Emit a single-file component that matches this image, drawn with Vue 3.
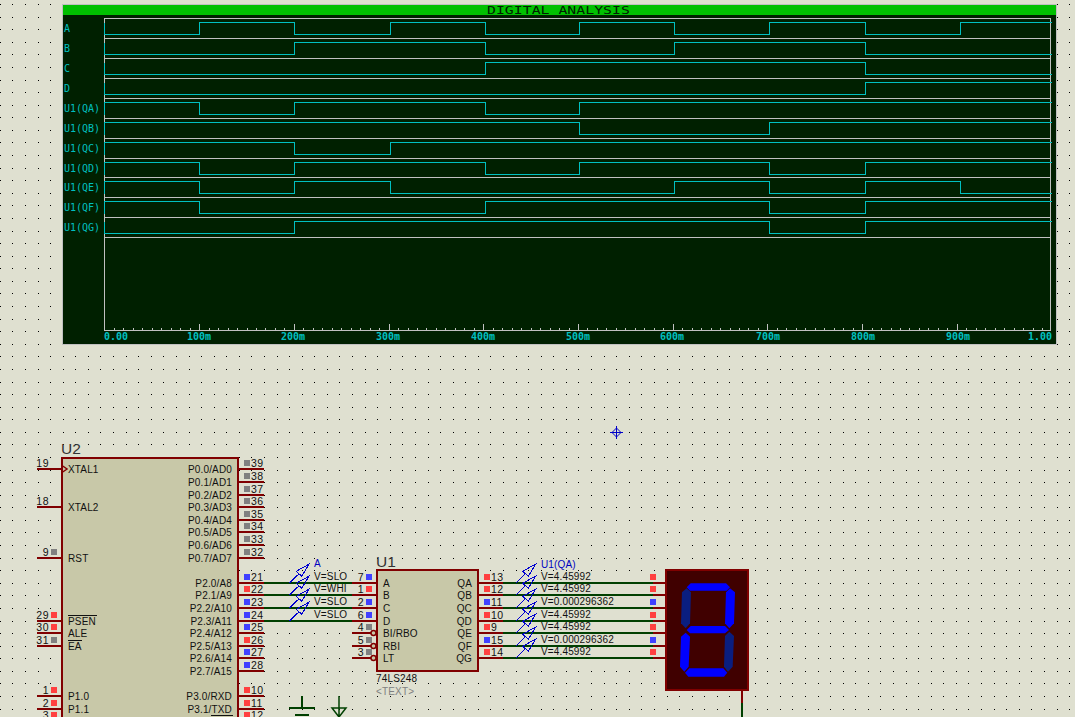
<template>
  <svg class="sheet" width="1075" height="717" viewBox="0 0 1075 717">
    <rect width="1075" height="717" class="paper" />
    <path :d="gridDots" class="dots" />

    <!-- digital analysis graph -->
    <rect x="62.5" y="4.5" width="994" height="340" class="graph" />
    <rect x="63" y="5" width="993" height="10" class="graph-bar" />
    <text transform="translate(487 13.5) scale(1.485 1)" class="graph-title">DIGITAL ANALYSIS</text>

    <path v-for="y in rowLines" :key="y" :d="`M104 ${y + 0.5}H1051`" class="grid-line" />
    <path d="M104.5 18V331M1050.5 18V331" class="grid-line" />
    <path :d="axisTicks" class="grid-line" />

    <g v-for="(row, i) in waves" :key="row.name">
      <text x="64" :y="rowLines[i] + 14" class="graph-text">{{ row.name }}</text>
      <path :d="wavePath(row.bits, rowLines[i])" class="wave" />
    </g>
    <text v-for="t in axisLabels" :key="t.s" :x="t.x" y="340" class="graph-text axis">{{ t.s }}</text>

    <!-- cursor -->
    <g class="cursor">
      <path d="M610 432.5H623M616.5 426V439" />
      <path d="M616.5 428L621 432.5L616.5 437L612 432.5Z" />
    </g>

    <!-- chips go under their pin labels -->
    <rect x="62" y="458" width="176" height="280" class="chip" />
    <rect x="377" y="570" width="101" height="101" class="chip" />
    <text x="61" y="454" class="ref">U2</text>
    <text x="376" y="567" class="ref">U1</text>

    <g v-for="p in allPins" :key="p.id">
      <path :d="`M${p.x1} ${p.y}H${p.x2}`" class="pin" />
      <rect v-if="p.c" :x="p.sx" :y="p.y - 9" width="6" height="6" :class="'st-' + p.c" />
      <text v-if="p.n" :x="p.nx" :y="p.y - 2.5" :class="['num', p.right ? '' : 'end']">{{ p.n }}</text>
    </g>
    <path d="M62 465.5L67 469L62 472.5" class="thin-pin" />
    <text v-for="l in chipLabels" :key="l.s" :x="l.x" :y="l.y + 4" :class="['lbl', l.end ? 'end' : '']">{{ l.s }}</text>
    <path d="M68 615.5H97M68 640.5H82M211 715.5H233" class="over" />

    <!-- wires -->
    <path v-for="y in wireLeft" :key="'wl' + y" :d="`M264 ${y}H352`" class="wire" />
    <path v-for="y in wireRight" :key="'wr' + y" :d="`M503 ${y}H653`" class="wire" />

    <circle v-for="y in [633, 646, 658]" :key="'c' + y" cx="373.5" :cy="y" r="2.5" class="bubble" />
    <text x="376" y="682" class="lbl">74LS248</text>
    <text x="376" y="695" class="lbl grey">&lt;TEXT&gt;</text>

    <!-- voltage probes -->
    <g v-for="p in probes" :key="p.key" :transform="`translate(${p.x} ${p.y})`" class="probe">
      <path d="M0 0L9.5 -9.2M19.7 -19L6.7 -11.7L12.3 -6.7Z" />
    </g>
    <text v-for="v in voltages" :key="v.key" :x="v.x" :y="v.y - 3" class="lbl">{{ v.s }}</text>
    <text x="314" y="567" class="lbl blue">A</text>
    <text x="541" y="568" class="lbl blue">U1(QA)</text>

    <!-- seven segment display -->
    <rect x="666" y="570" width="82" height="120" class="display" />
    <g transform="translate(630 560) scale(0.3333)">
      <polygon v-for="s in segments" :key="s.id" :points="s.pts" :class="s.on ? 'seg-on' : 'seg-off'" />
    </g>
    <path d="M742 691V704" class="pin" />
    <path d="M742 703V717" class="wire" />

    <!-- power terminals -->
    <path d="M302 696V708M289 708H315M295 715H309" class="wire thin" />
    <path d="M339 696V717M332 708H346L339 717Z" class="wire thin open" />
  </svg>
</template>

<script setup>
const gridDots = (() => {
  let d = '';
  for (let i = 0; i < 86; i++) {
    for (let j = 0; j < 57; j++) {
      const x = Math.floor(0.3 + 12.58 * i);
      const y = Math.floor(4.6 + 12.58 * j);
      d += `M${x} ${y + 0.5}h1`;
    }
  }
  return d;
})();

const rowLines = [18, 38, 58, 78, 98, 118, 138, 158, 177, 197, 217, 237];
const steps = [104, 199, 294, 390, 485, 579, 674, 769, 865, 960, 1052];

const waves = [
  { name: 'A', bits: '0101010101' },
  { name: 'B', bits: '0011001100' },
  { name: 'C', bits: '0000111100' },
  { name: 'D', bits: '0000000011' },
  { name: 'U1(QA)', bits: '1011011111' },
  { name: 'U1(QB)', bits: '1111100111' },
  { name: 'U1(QC)', bits: '1101111111' },
  { name: 'U1(QD)', bits: '1011011011' },
  { name: 'U1(QE)', bits: '1010001010' },
  { name: 'U1(QF)', bits: '1000111011' },
  { name: 'U1(QG)', bits: '0011111011' },
];

function wavePath(bits, top) {
  const hi = top + 4.5;
  const lo = top + 16.5;
  const other = bits[0] === '1' ? lo : hi;
  let d = `M104.5 ${other}`;
  for (let i = 0; i < bits.length; i++) {
    const y = bits[i] === '1' ? hi : lo;
    d += `V${y}H${i === bits.length - 1 ? steps[i + 1] : steps[i + 1] + 0.5}`;
  }
  return d;
}

const axisTicks = (() => {
  let d = '';
  for (let i = 1; i < 100; i++) {
    const x = Math.round(104.5 + 9.47 * i) + 0.5;
    d += `M${x} ${i % 10 === 0 ? 324 : 328}V330`;
  }
  return d + 'M104 330.5H1051';
})();

const axisLabels = [
  { x: 104, s: '0.00' }, { x: 187, s: '100m' }, { x: 281, s: '200m' }, { x: 376, s: '300m' },
  { x: 471, s: '400m' }, { x: 566, s: '500m' }, { x: 660, s: '600m' }, { x: 756, s: '700m' },
  { x: 851, s: '800m' }, { x: 946, s: '900m' }, { x: 1028, s: '1.00' },
];

const u2LeftPins = [
  [19, 469, ''], [18, 507, ''], [9, 558, 'g'], [29, 621, 'r'], [30, 633, 'r'], [31, 646, 'g'],
  [1, 696, 'r'], [2, 709, 'r'], [3, 721, 'r'],
];
const u2RightPins = [
  [39, 469, 'g'], [38, 482, 'g'], [37, 495, 'g'], [36, 507, 'g'], [35, 520, 'g'], [34, 532, 'g'],
  [33, 545, 'g'], [32, 558, 'g'], [21, 583, 'b'], [22, 595, 'r'], [23, 608, 'b'], [24, 621, 'b'],
  [25, 633, 'b'], [26, 646, 'r'], [27, 658, 'b'], [28, 671, 'b'], [10, 696, 'r'], [11, 709, 'r'], [12, 721, 'r'],
];
const u1LeftPins = [
  [7, 583, 'b'], [1, 595, 'r'], [2, 608, 'b'], [6, 621, 'b'], [4, 633, 'g'], [5, 646, 'g'], [3, 658, 'g'],
];
const u1RightPins = [
  [13, 583, 'r'], [12, 595, 'r'], [11, 608, 'b'], [10, 621, 'r'], [9, 633, 'r'], [15, 646, 'b'], [14, 658, 'r'],
];
const dispPins = [
  [583, 'r'], [595, 'r'], [608, 'b'], [621, 'r'], [633, 'r'], [646, 'b'], [658, 'r'],
];

const allPins = [
  ...u2LeftPins.map(([n, y, c]) => ({ id: 'ul' + n, n, y, c, x1: 37, x2: 62, sx: 51, nx: 49, right: false })),
  ...u2RightPins.map(([n, y, c]) => ({ id: 'ur' + n, n, y, c, x1: 238, x2: 264, sx: 244, nx: 251, right: true })),
  ...u1LeftPins.map(([n, y, c]) => ({ id: 'al' + n, n, y, c, x1: 352, x2: y > 625 ? 371 : 377, sx: 366, nx: 364, right: false })),
  ...u1RightPins.map(([n, y, c]) => ({ id: 'ar' + n, n, y, c, x1: 478, x2: 503, sx: 484, nx: 491, right: true })),
  ...dispPins.map(([y, c]) => ({ id: 'd' + y, y, c, x1: 653, x2: 666, sx: 650 })),
];

const chipLabels = [
  ['XTAL1', 68, 469], ['XTAL2', 68, 507], ['RST', 68, 558], ['PSEN', 68, 621], ['ALE', 68, 633],
  ['EA', 68, 646], ['P1.0', 68, 696], ['P1.1', 68, 709],
  ['A', 383, 583], ['B', 383, 595], ['C', 383, 608], ['D', 383, 621],
  ['BI/RBO', 383, 633], ['RBI', 383, 646], ['LT', 383, 658],
].map(([s, x, y]) => ({ s, x, y, end: false })).concat([
  ['P0.0/AD0', 232, 469], ['P0.1/AD1', 232, 482], ['P0.2/AD2', 232, 495], ['P0.3/AD3', 232, 507],
  ['P0.4/AD4', 232, 520], ['P0.5/AD5', 232, 532], ['P0.6/AD6', 232, 545], ['P0.7/AD7', 232, 558],
  ['P2.0/A8', 232, 583], ['P2.1/A9', 232, 595], ['P2.2/A10', 232, 608], ['P2.3/A11', 232, 621],
  ['P2.4/A12', 232, 633], ['P2.5/A13', 232, 646], ['P2.6/A14', 232, 658], ['P2.7/A15', 232, 671],
  ['P3.0/RXD', 232, 696], ['P3.1/TXD', 232, 709],
  ['QA', 472, 583], ['QB', 472, 595], ['QC', 472, 608], ['QD', 472, 621],
  ['QE', 472, 633], ['QF', 472, 646], ['QG', 472, 658],
].map(([s, x, y]) => ({ s, x, y, end: true })));

const wireLeft = [583, 595, 608, 621];
const wireRight = [583, 595, 608, 621, 633, 646, 658];

const probes = [
  ...wireLeft.map((y) => ({ key: 'l' + y, x: 289.5, y })),
  ...wireRight.map((y) => ({ key: 'r' + y, x: 516, y })),
];

const voltages = [
  ...['V=SLO', 'V=WHI', 'V=SLO', 'V=SLO'].map((s, i) => ({ key: 'vl' + i, s, x: 314, y: wireLeft[i] })),
  ...['V=4.45992', 'V=4.45992', 'V=0.000296362', 'V=4.45992', 'V=4.45992', 'V=0.000296362', 'V=4.45992']
    .map((s, i) => ({ key: 'vr' + i, s, x: 541, y: wireRight[i] })),
];

// coordinates are 3x, taken from the enlarged display
const segments = [
  { id: 'a', on: true, pts: '170,82 182,70 288,70 300,82 290,92 180,92' },
  { id: 'f', on: false, pts: '170,85 183,97 180,190 167,205 153,190 156,97' },
  { id: 'b', on: true, pts: '300,85 315,97 312,190 298,205 285,190 288,97' },
  { id: 'g', on: true, pts: '170,210 182,198 285,198 297,210 285,220 180,220' },
  { id: 'e', on: true, pts: '167,218 180,230 176,320 163,335 150,320 153,230' },
  { id: 'c', on: false, pts: '298,215 312,228 308,320 294,335 282,320 285,228' },
  { id: 'd', on: true, pts: '165,338 178,325 280,325 292,338 282,350 175,350' },
];
</script>

<style scoped>
.sheet { display: block; shape-rendering: crispEdges; }
.paper { fill: #dfe0d0; }
.dots { stroke: #000; stroke-width: 1; fill: none; }
.graph { fill: #002000; stroke: #c0c0c0; stroke-width: 1; }
.graph-bar { fill: #00c000; }
.graph-title { font: 10px "DejaVu Sans Mono", monospace; fill: #002000; }
.grid-line { stroke: #c0c0c0; stroke-width: 1; fill: none; }
.wave { stroke: #00c0c0; stroke-width: 1; fill: none; }
.graph-text { font: 10px "DejaVu Sans Mono", monospace; fill: #00c0c0; }
.axis { font-weight: bold; }
.ref { font: 15.5px "Liberation Sans", sans-serif; fill: #333; }
.lbl { font: 10px "Liberation Sans", sans-serif; letter-spacing: 0.15px; fill: #111; }
.num { font: 10.5px "Liberation Sans", sans-serif; letter-spacing: 0.5px; fill: #111; }
.end { text-anchor: end; }
.grey { fill: #808080; }
.blue { fill: #0000c0; }
.pin { stroke: #800000; stroke-width: 2; fill: none; }
.thin-pin { stroke: #800000; stroke-width: 1.5; fill: none; shape-rendering: auto; }
.over { stroke: #111; stroke-width: 1; fill: none; }
.chip { fill: #c8c8a8; stroke: #800000; stroke-width: 2; }
.bubble { fill: #c8c8a8; stroke: #800000; stroke-width: 1.5; shape-rendering: auto; }
.wire { stroke: #004000; stroke-width: 2; fill: none; }
.thin { stroke-width: 1.5; }
.open { shape-rendering: auto; }
.probe { stroke: #0000d0; stroke-width: 1; fill: none; }
.cursor { stroke: #0000c8; stroke-width: 1; fill: none; shape-rendering: auto; }
.display { fill: #400000; stroke: #800000; stroke-width: 2; }
.seg-on { fill: #0000ff; shape-rendering: auto; }
.seg-off { fill: #0a1e80; shape-rendering: auto; }
.st-r { fill: #ff4040; }
.st-g { fill: #808080; }
.st-b { fill: #4040ff; }
</style>
